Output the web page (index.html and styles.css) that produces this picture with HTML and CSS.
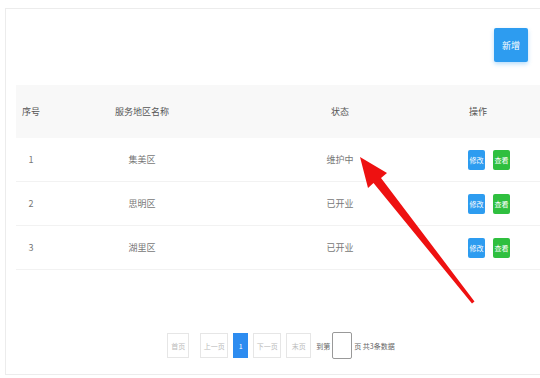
FILE: index.html
```html
<!DOCTYPE html>
<html>
<head>
  <meta charset="utf-8">
  <title>服务地区</title>
  <link rel="stylesheet" href="styles.css">
</head>
<body>
  <div class="card">
    <div class="toolbar">
      <button class="btn-add">新增</button>
    </div>

    <div class="table">
      <div class="row head">
        <div class="c1">序号</div>
        <div class="c2">服务地区名称</div>
        <div class="c3">状态</div>
        <div class="c4 op-title">操作</div>
      </div>
      <div class="row">
        <div class="c1">1</div>
        <div class="c2">集美区</div>
        <div class="c3">维护中</div>
        <div class="c4"><span class="mini blue">修改</span><span class="mini green">查看</span></div>
      </div>
      <div class="row">
        <div class="c1">2</div>
        <div class="c2">思明区</div>
        <div class="c3">已开业</div>
        <div class="c4"><span class="mini blue">修改</span><span class="mini green">查看</span></div>
      </div>
      <div class="row">
        <div class="c1">3</div>
        <div class="c2">湖里区</div>
        <div class="c3">已开业</div>
        <div class="c4"><span class="mini blue">修改</span><span class="mini green">查看</span></div>
      </div>
    </div>

    <div class="pager">
      <span class="pg first">首页</span>
      <span class="pg w28">上一页</span>
      <span class="pg cur">1</span>
      <span class="pg w28">下一页</span>
      <span class="pg">末页</span>
      <span class="pg-text">到第</span>
      <span class="pg-input"></span>
      <span class="pg-text">页 共3条数据</span>
    </div>
  </div>

  <!-- 标注箭头 -->
  <svg class="arrow" width="540" height="378" viewBox="0 0 540 378">
    <polygon points="360,157 387,173 381,178 474.5,301.5 472,303.5 373.5,183 368,188" fill="#ee1111"/>
  </svg>
</body>
</html>
```

FILE: styles.css
```css
/* 页面样式 */
body {
  margin: 0;
  background: #fff;
  font-family: "Noto Sans CJK SC", "Noto Sans", sans-serif;
  color: #777;
  position: relative;
  overflow: hidden;
}

.card {
  margin: 8px 0 0 5px;
  height: 367px;
  border: 1px solid #ececec;
  border-right: none;
  padding-left: 10px;
  box-sizing: border-box;
}

.toolbar {
  display: flex;
  justify-content: flex-end;
  padding: 19px 12px 0 0;
  height: 57px;
}

.btn-add {
  width: 34px;
  height: 34px;
  border: none;
  border-radius: 2px;
  background: #2d9cf0;
  color: #fff;
  font-size: 9px;
  font-family: inherit;
  box-shadow: 0 2px 4px rgba(45, 156, 240, 0.35);
  padding: 0;
}

.row {
  display: grid;
  grid-template-columns: 30px 192px 204px 1fr;
  align-items: center;
  height: 44px;
  border-bottom: 1px solid #f2f2f2;
  box-sizing: border-box;
  font-size: 9px;
}

.row.head {
  height: 53px;
  background: #f8f8f8;
  border-bottom: none;
  color: #555;
}

.c1, .c2, .c3 {
  text-align: center;
}

.c4 {
  display: flex;
  gap: 8px;
  padding-left: 26px;
}

.op-title {
  padding-left: 27px;
}

.mini {
  display: inline-flex;
  align-items: center;
  justify-content: center;
  width: 17px;
  height: 20px;
  border-radius: 2px;
  color: #fff;
  font-size: 7px;
}

.mini.blue {
  background: #2d9cf0;
}

.mini.green {
  background: #2fbf3f;
}

.pager {
  display: flex;
  justify-content: center;
  align-items: center;
  gap: 5px;
  margin-top: 62px;
  padding-left: 6px;
  font-size: 7px;
}

.pg {
  display: inline-flex;
  align-items: center;
  justify-content: center;
  width: 25px;
  height: 25px;
  border: 1px solid #e6e6e6;
  box-sizing: border-box;
  color: #bbb;
}

.pg.first {
  width: 22px;
  margin-right: 6px;
}

.pg.w28 {
  width: 28px;
}

.pg.cur {
  width: 15px;
  background: #2d8cf0;
  border-color: #2d8cf0;
  color: #fff;
}

.pg-text {
  color: #666;
  font-size: 7px;
}

.pg-input {
  width: 20px;
  height: 27px;
  border: 1px solid #999;
  border-radius: 2px;
  box-sizing: border-box;
  margin: 0 -3px;
}

.arrow {
  position: absolute;
  left: 0;
  top: 0;
  pointer-events: none;
}
```
